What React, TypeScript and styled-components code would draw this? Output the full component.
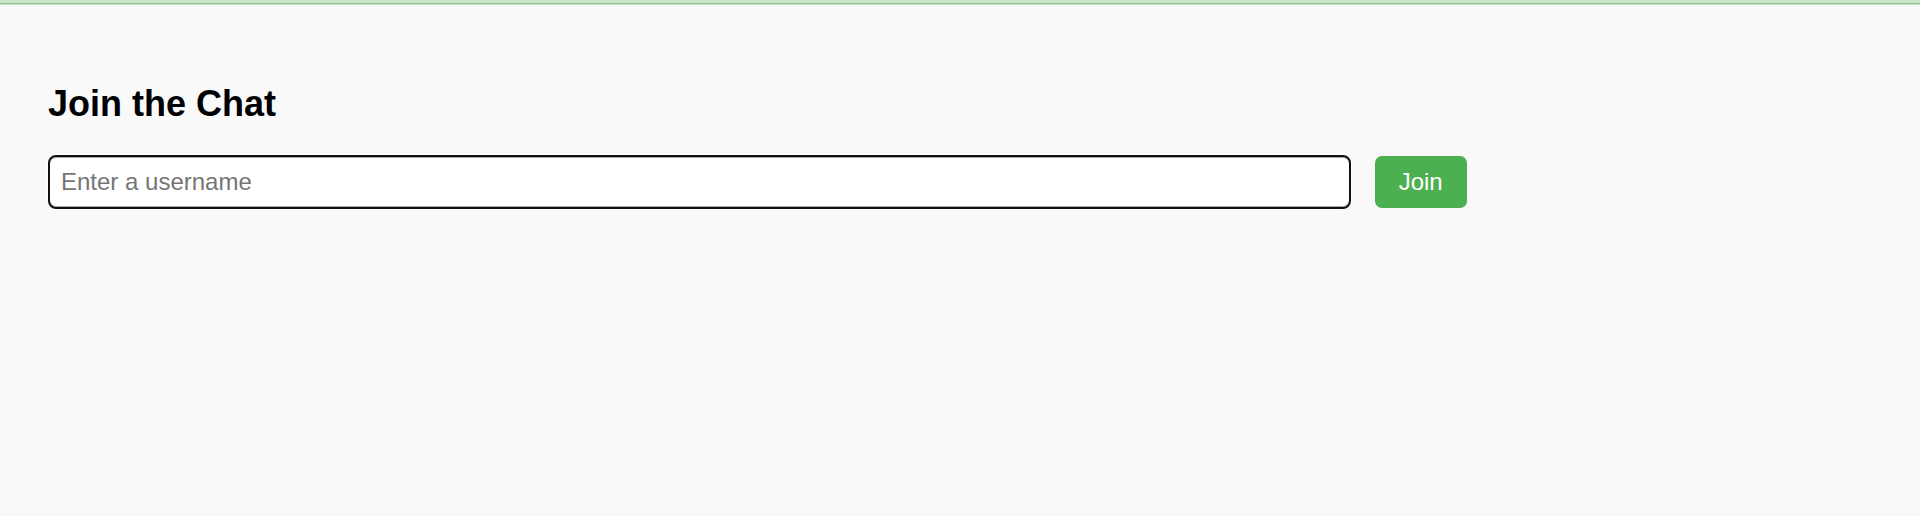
import React, { useState } from "react";
import styled, { createGlobalStyle } from "styled-components";

const GlobalStyle = createGlobalStyle`
  body {
    margin: 0;
    background: #f9f9f9;
    color: #000;
    font-family: Arial, "Liberation Sans", sans-serif;
  }
`;

const TopBar = styled.header`
  height: 3px;
  background: #c8e6c9;
  border-bottom: 1px solid #98b898;
  box-shadow: 0 1px 0 #c3dfc4;
`;

const JoinPanel = styled.main`
  padding: 78px 48px 48px;
`;

const Title = styled.h1`
  margin: 0 0 29px;
  font-size: 36px;
  line-height: 44px;
`;

const JoinForm = styled.form`
  display: flex;
  align-items: center;
  gap: 24px;
  width: calc(78% - 4px);
`;

const UsernameInput = styled.input`
  flex: 1;
  min-width: 0;
  box-sizing: border-box;
  height: 54px;
  padding: 0 11px;
  border: 2px solid #101010;
  border-radius: 8px;
  outline: none;
  background: #fff;
  box-shadow: 0 0 0 1px #fff, inset 0 1px 0 #a3aaa3, inset 0 -1px 0 #a3aaa3;
  font: 24px Arial, "Liberation Sans", sans-serif;

  &::placeholder {
    color: #757575;
  }
`;

const JoinButton = styled.button`
  height: 52px;
  padding: 0 24px;
  border: 0;
  border-radius: 7px;
  background: #4caf50;
  color: #fff;
  font: 24px Arial, "Liberation Sans", sans-serif;
  cursor: pointer;
`;

export default function App() {
  const [username, setUsername] = useState("");
  return (
    <>
      <GlobalStyle />
      <TopBar />
      <JoinPanel>
        <Title>Join the Chat</Title>
        <JoinForm onSubmit={(event) => event.preventDefault()}>
          <UsernameInput
            type="text"
            aria-label="Username"
            placeholder="Enter a username"
            value={username}
            onChange={(event) => setUsername(event.target.value)}
          />
          <JoinButton type="submit">Join</JoinButton>
        </JoinForm>
      </JoinPanel>
    </>
  );
}
